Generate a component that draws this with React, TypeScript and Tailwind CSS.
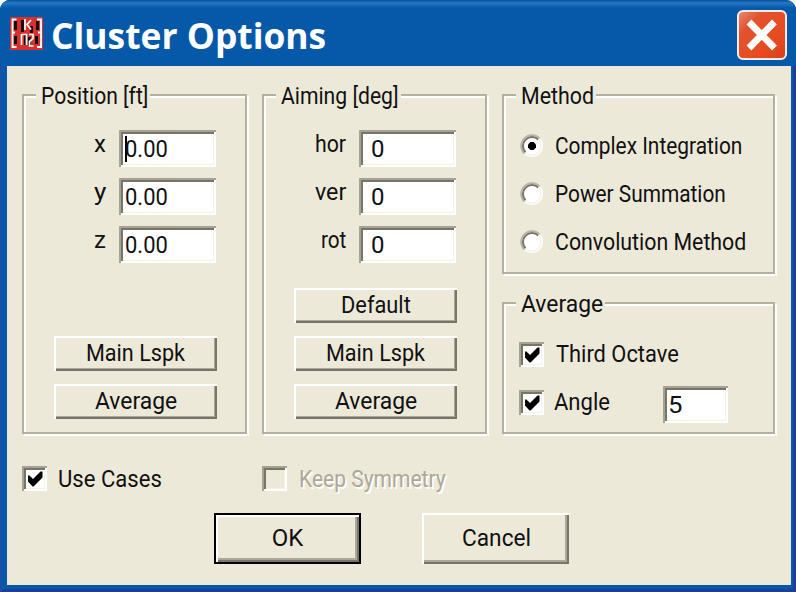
import { useLayoutEffect, useRef, useState } from "react";
import type { ReactNode } from "react";

const BEVEL_IN =
  "shadow-[inset_2px_2px_0_#a5a294,inset_-2px_-2px_0_#ffffff,inset_4px_4px_0_#77746a,inset_-3px_-3px_0_#f4f1e6]";

/** Text squeezed horizontally to an exact width. */
function Fit({ children, w, className = "" }: { children: string; w: number; className?: string }) {
  const ref = useRef<HTMLSpanElement>(null);
  const [scale, setScale] = useState(1);
  useLayoutEffect(() => {
    if (ref.current) setScale(w / ref.current.offsetWidth);
  }, [w, children]);
  return (
    <span className={`block shrink-0 ${className}`} style={{ width: w }}>
      <span
        ref={ref}
        className="inline-block origin-left whitespace-nowrap align-top"
        style={{ transform: `scaleX(${scale})` }}
      >
        {children}
      </span>
    </span>
  );
}

function Group({ title, w, className = "", children }: { title: string; w: number; className?: string; children: ReactNode }) {
  return (
    <section
      className={`flex flex-col border-2 border-[#b3b0a1] shadow-[2px_2px_0_#fff,inset_2px_2px_0_#fff] ${className}`}
    >
      <h2 className="-mt-[14px] ml-[12px] flex h-[28px] self-start bg-[#ede9d9] pl-[5px] pr-[2px] pt-[2px]">
        <Fit w={w}>{title}</Fit>
      </h2>
      {children}
    </section>
  );
}

function Field({ label, lw, value, vw, pad, caret = false }: { label: string; lw: number; value: string; vw: number; pad: string; caret?: boolean }) {
  return (
    <div className="flex h-[37px] items-start justify-end pr-[29px]">
      <Fit w={lw} className="mr-[13px] mt-[2px]">
        {label}
      </Fit>
      <div className={`flex h-[37px] w-[97px] bg-white pt-[7px] ${pad} ${BEVEL_IN}`}>
        {caret && <span className="-mr-[2px] -mt-[1px] h-[26px] w-[2px] bg-black" />}
        <Fit w={vw}>{value}</Fit>
      </div>
    </div>
  );
}

function SmallButton({ w, children }: { w: number; children: string }) {
  return (
    <button className="flex h-[35px] w-[163px] justify-center pt-[5px] shadow-[inset_2px_2px_0_#fff,inset_-2px_-2px_0_#77746a,inset_-3px_-3px_0_#aca899]">
      <Fit w={w}>{children}</Fit>
    </button>
  );
}

function Check({ checked = false, disabled = false }: { checked?: boolean; disabled?: boolean }) {
  return (
    <span className={`flex h-[25px] w-[25px] shrink-0 ${disabled ? "" : "bg-white"} ${BEVEL_IN}`}>
      {checked && (
        <svg viewBox="0 0 25 25" className="h-[25px] w-[25px]">
          <path d="M6 9.5 L7.500 9.5 L11 13 L18.500 5.5 H20.5 V11.5 L11.500 20.5 H10.500 L6 15.500 Z" fill="#000" />
        </svg>
      )}
    </span>
  );
}

function Radio({ on = false, w, children }: { on?: boolean; w: number; children: string }) {
  return (
    <div className="flex h-[24px] items-center">
      <svg viewBox="0 0 24 24" className="mr-[11px] h-[24px] w-[24px] shrink-0">
        <circle cx="12" cy="12" r="11" fill="#fff" />
        <path d="M4.3 19.7 A10.8 10.8 0 0 1 19.7 4.3" fill="none" stroke="#b5b2a3" strokeWidth="1.6" />
        <path d="M5.6 18.4 A9 9 0 0 1 18.4 5.6" fill="none" stroke="#77746a" strokeWidth="2" />
        <path d="M18.4 5.6 A9 9 0 0 1 5.6 18.4" fill="none" stroke="#f4f1e6" strokeWidth="1.4" />
        {on && <path d="M10.5 8 h3 l2.5 2.5 v3 L13.5 16 h-3 L8 13.5 v-3 Z" fill="#000" />}
      </svg>
      <Fit w={w}>{children}</Fit>
    </div>
  );
}

function AppIcon() {
  return (
    <svg viewBox="0 0 33 33" className="h-[33px] w-[33px]">
      <rect width="33" height="33" fill="#d8302c" />
      <path d="M4 4h3v9H4zM4 19h3v8H4zM11 3h3v12h-3zM14 17h3v11h-3zM20 9h3v7h-3zM18 20h3v9h-3zM26 4h3v9h-3zM25 19h3v8h-3z" fill="#160d10" />
      <path d="M6.500 2.500H2.500V30H6.500M27 2.500H31V30H27M3 15.500H5M28 15.500H30" fill="none" stroke="#fff" strokeWidth="1.8" />
      <path d="M15 2v11M21 3l-4 4.500 4 5M11.500 17v11M12 17.500h4.500V28M19 17.500h4v4l-3.500 3v4.500h4" fill="none" stroke="#fff" strokeWidth="1.7" />
    </svg>
  );
}

export default function App() {
  return (
    <div className="h-[592px] w-[796px] bg-white">
      <main className="flex h-full w-full select-none flex-col overflow-hidden rounded-t-[10px] bg-[#0659a8] font-['Roboto','Liberation_Sans',sans-serif] text-[24px] leading-[24px] text-[#111] shadow-[inset_2px_0_0_#1b4fa5,inset_-3px_-3px_0_#1c3f9a]">
        <header className="flex h-[66px] shrink-0 items-start bg-[linear-gradient(180deg,#0a4f9f_0px,#2478c4_3px,#1a6cb9_5px,#0659a8_8px,#0659a8_100%)] pl-[10px] pr-[9px]">
          <div className="mt-[17px]">
            <AppIcon />
          </div>
          <h1 className="ml-[8px] mt-[13px] grow font-['Open_Sans','Noto_Sans',sans-serif] text-[35px] font-bold leading-[46px] text-white">
            <Fit w={275}>Cluster Options</Fit>
          </h1>
          <button className="mt-[10px] flex h-[50px] w-[50px] items-center justify-center rounded-[6px] border-2 border-[#fbeee9] bg-[linear-gradient(135deg,#e58a70_0%,#e2532f_25%,#e84a20_70%,#d84018_100%)]">
            <svg viewBox="0 0 46 46" className="h-[46px] w-[46px]">
              <path d="M10 10 L35.500 36 M35.500 10 L10 36" stroke="#fff" strokeWidth="6.800" />
            </svg>
          </button>
        </header>

        <div className="ml-[7px] flex h-[519px] w-[784px] flex-col bg-[#ede9d9] pl-[15px] pt-[28px]">
          <div className="flex h-[340px] gap-[16px]">
            <Group title="Position [ft]" w={107} className="w-[225px]">
              <div className="mt-[20px] flex flex-col gap-[11px]">
                <Field label="x" lw={12} value="0.00" vw={43} pad="pl-[6px]" caret />
                <Field label="y" lw={12} value="0.00" vw={43} pad="pl-[6px]" />
                <Field label="z" lw={12} value="0.00" vw={43} pad="pl-[6px]" />
              </div>
              <div className="mt-[73px] flex flex-col gap-[13px] pl-[30px]">
                <SmallButton w={99}>Main Lspk</SmallButton>
                <SmallButton w={82}>Average</SmallButton>
              </div>
            </Group>

            <Group title="Aiming [deg]" w={118} className="-ml-[1px] w-[225px]">
              <div className="mt-[20px] flex flex-col gap-[11px]">
                <Field label="hor" lw={31} value="0" vw={14} pad="pl-[12px]" />
                <Field label="ver" lw={31} value="0" vw={14} pad="pl-[12px]" />
                <Field label="rot" lw={25} value="0" vw={14} pad="pl-[12px]" />
              </div>
              <div className="mt-[25px] flex flex-col gap-[13px] pl-[30px]">
                <SmallButton w={70}>Default</SmallButton>
                <SmallButton w={99}>Main Lspk</SmallButton>
                <SmallButton w={82}>Average</SmallButton>
              </div>
            </Group>

            <div className="-ml-[1px] flex w-[273px] flex-col">
              <Group title="Method" w={73} className="h-[180px]">
                <div className="mt-[24px] flex flex-col gap-[24px] pl-[16px]">
                  <Radio on w={187}>Complex Integration</Radio>
                  <Radio w={171}>Power Summation</Radio>
                  <Radio w={191}>Convolution Method</Radio>
                </div>
              </Group>
              <Group title="Average" w={82} className="mt-[28px] h-[132px]">
                <div className="mt-[24px] flex h-[25px] pl-[15px]">
                  <Check checked />
                  <Fit w={123} className="ml-[12px]">Third Octave</Fit>
                </div>
                <div className="mt-[19px] flex h-[37px] items-start pl-[15px]">
                  <div className="flex pt-[4px]">
                    <Check checked />
                    <Fit w={56} className="ml-[10px]">Angle</Fit>
                  </div>
                  <div className={`ml-[53px] flex h-[37px] w-[65px] bg-white pl-[5px] pt-[7px] ${BEVEL_IN}`}>
                    <Fit w={15}>5</Fit>
                  </div>
                </div>
              </Group>
            </div>
          </div>

          <div className="mt-[32px] flex h-[25px]">
            <div className="flex w-[240px]">
              <Check checked />
              <Fit w={104} className="ml-[11px] mt-[1px]">Use Cases</Fit>
            </div>
            <Check disabled />
            <Fit w={147} className="ml-[12px] mt-[1px] text-[#aca899] [text-shadow:2px_2px_0_#fff]">Keep Symmetry</Fit>
          </div>

          <div className="mt-[22px] flex gap-[61px] pl-[192px]">
            <button className="flex h-[51px] w-[147px] justify-center border-2 border-black pt-[11px] shadow-[inset_2px_2px_0_#fff,inset_-2px_-2px_0_#77746a,inset_-4px_-4px_0_#aca899]">
              <Fit w={32}>OK</Fit>
            </button>
            <button className="flex h-[51px] w-[147px] justify-center pt-[13px] shadow-[inset_2px_2px_0_#fff,inset_-2px_-2px_0_#77746a,inset_-4px_-4px_0_#aca899]">
              <Fit w={69} className="ml-[2px]">Cancel</Fit>
            </button>
          </div>
        </div>
      </main>
    </div>
  );
}
